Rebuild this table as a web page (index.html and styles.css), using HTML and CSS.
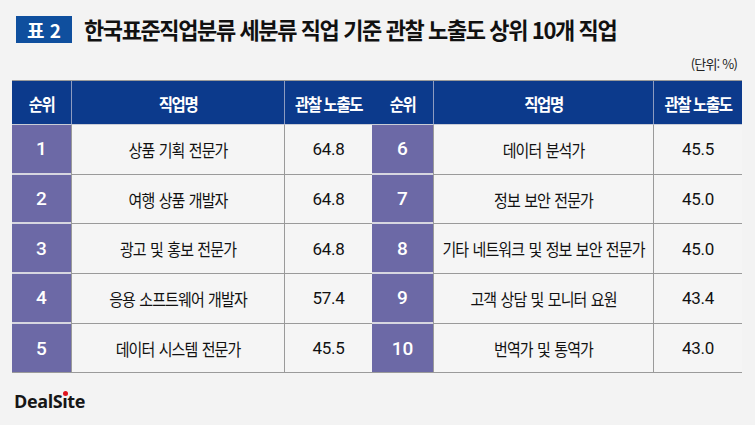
FILE: index.html
```html
<!DOCTYPE html>
<html lang="ko">
<head>
<meta charset="utf-8">
<link rel="stylesheet" href="styles.css">
</head>
<body>
<div class="page">
  <div class="title-row">
    <span class="badge">표 2</span>
    <h1 class="title">한국표준직업분류 세분류 직업 기준 관찰 노출도 상위 10개 직업</h1>
  </div>
  <div class="unit">(단위: %)</div>
  <div class="tables">
    <div class="tbl tbl-left">
      <div class="th"><span class="tx">순위</span></div><div class="th"><span class="tx">직업명</span></div><div class="th"><span class="tx">관찰 노출도</span></div>
      <div class="rank">1</div><div class="name"><span class="tx">상품 기획 전문가</span></div><div class="val">64.8</div>
      <div class="rank">2</div><div class="name"><span class="tx">여행 상품 개발자</span></div><div class="val">64.8</div>
      <div class="rank">3</div><div class="name"><span class="tx">광고 및 홍보 전문가</span></div><div class="val">64.8</div>
      <div class="rank">4</div><div class="name"><span class="tx">응용 소프트웨어 개발자</span></div><div class="val">57.4</div>
      <div class="rank">5</div><div class="name"><span class="tx">데이터 시스템 전문가</span></div><div class="val">45.5</div>
    </div>
    <div class="tbl tbl-right">
      <div class="th"><span class="tx">순위</span></div><div class="th"><span class="tx">직업명</span></div><div class="th"><span class="tx">관찰 노출도</span></div>
      <div class="rank">6</div><div class="name"><span class="tx">데이터 분석가</span></div><div class="val">45.5</div>
      <div class="rank">7</div><div class="name"><span class="tx">정보 보안 전문가</span></div><div class="val">45.0</div>
      <div class="rank">8</div><div class="name"><span class="tx">기타 네트워크 및 정보 보안 전문가</span></div><div class="val">45.0</div>
      <div class="rank">9</div><div class="name"><span class="tx">고객 상담 및 모니터 요원</span></div><div class="val">43.4</div>
      <div class="rank">10</div><div class="name"><span class="tx">번역가 및 통역가</span></div><div class="val">43.0</div>
    </div>
  </div>
  <div class="logo">Deal<span class="logo-s">S<span class="dotless">ı<span class="reddot"></span></span>te</span></div>
</div>
</body>
</html>
```

FILE: styles.css
```css
* { box-sizing: border-box; }
html, body { margin: 0; padding: 0; }
body {
  background: #f3f3f3;
  font-family: "Noto Sans CJK KR", "Noto Sans", sans-serif;
  color: #111;
  width: 755px;
  height: 425px;
  overflow: hidden;
}
.page {
  padding: 16px 13px 0 12px;
}
.title-row {
  display: flex;
  align-items: center;
  height: 27px;
  padding-left: 4px;
}
.badge {
  width: 56px;
  height: 27px;
  background: #0f4f9e;
  color: #fff;
  font-weight: 700;
  font-size: 19px;
  line-height: 27px;
  text-align: center;
}
.title {
  margin: 0 0 0 12px;
  font-size: 22px;
  font-weight: 700;
  letter-spacing: -1.4px;
  line-height: 27px;
  color: #111;
  transform: scaleY(1.05);
  transform-origin: left center;
}
.unit {
  text-align: right;
  font-size: 13px;
  color: #222;
  margin-top: 12px;
  height: 25px;
  line-height: 17px;
  padding-right: 5px;
  letter-spacing: -0.8px;
}
.tables {
  display: flex;
  width: 730px;
  border-top: 1px solid #9a9a9a;
}
.tbl {
  display: grid;
  grid-template-rows: 44px repeat(5, 49.7px);
}
.tbl-left {
  width: 360px;
  grid-template-columns: 59px 213px 88px;
  border-right: 2px solid #8c8c8c;
}
.tbl-right {
  width: 370px;
  grid-template-columns: 61px 220px 89px;
}
.tx {
  display: inline-block;
  transform: scaleY(1.12);
}
.th {
  background: #0c3a8c;
  color: #fff;
  font-weight: 700;
  font-size: 15.5px;
  letter-spacing: -1.4px;
  display: flex;
  align-items: center;
  justify-content: center;
  border-left: 1px solid #8d9bc0;
  border-bottom: 1px solid #c9ccd6;
}
.th:first-child { border-left: none; }
.rank {
  background: #6c69a6;
  color: #fff;
  font-family: Roboto, "Noto Sans", sans-serif;
  font-weight: 500;
  font-size: 19px;
  display: flex;
  align-items: center;
  justify-content: center;
  border-bottom: 2px solid #d6d6e0;
}
.tbl .rank:nth-last-child(3) { border-bottom: 1px solid #9a9a9a; }
.name, .val {
  background: #f5f5f5;
  display: flex;
  align-items: center;
  justify-content: center;
  border-left: 1px solid #9a9a9a;
  border-bottom: 1px solid #9a9a9a;
}
.name {
  font-size: 15px;
  letter-spacing: -0.9px;
  word-spacing: 1px;
  color: #111;
}
.val {
  font-family: Roboto, "Noto Sans", sans-serif;
  font-size: 17px;
  color: #111;
  letter-spacing: -0.3px;
}
.logo {
  margin-top: 17px;
  margin-left: 2px;
  font-family: "Open Sans", "Noto Sans", sans-serif;
  font-weight: 700;
  font-size: 18px;
  letter-spacing: -0.4px;
  color: #161616;
  line-height: 22px;
}
.dotless {
  position: relative;
}
.reddot {
  position: absolute;
  left: 0.5px;
  top: 1.5px;
  width: 5.5px;
  height: 5.5px;
  border-radius: 50%;
  background: #e0141e;
}
```
